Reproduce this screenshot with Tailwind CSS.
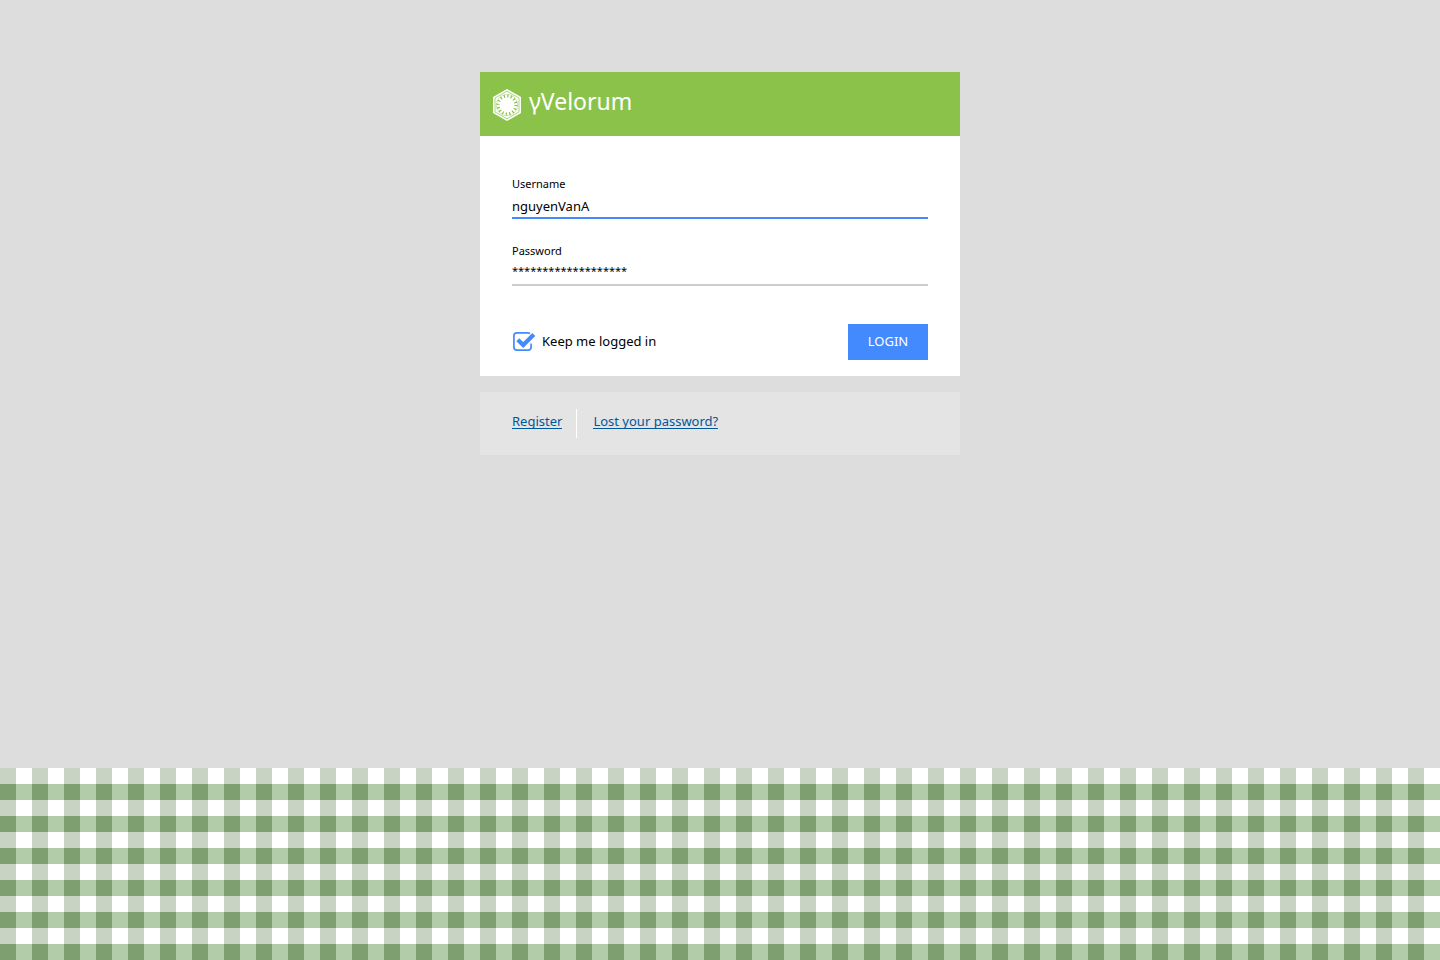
<!DOCTYPE html>
<html lang="en">
<head>
<meta charset="utf-8">
<meta name="viewport" content="width=device-width, initial-scale=1">
<title>γVelorum</title>
<script src="https://cdn.jsdelivr.net/npm/@tailwindcss/browser@4"></script>
</head>
<body class="flex min-h-screen flex-col bg-[#dddddd] font-['Segoe_UI','Noto_Sans',sans-serif] text-[13px] leading-5 text-black">
<main class="mx-auto w-full max-w-[480px] flex-1 pt-18 pb-8">
  <header class="flex h-16 items-center gap-2 bg-[#8bc34a] pl-[13px] text-white">
    <svg class="mt-0.5 h-8 w-7 shrink-0" viewBox="0 0 28 32" aria-hidden="true">
      <path d="M14 0 28 8V24L14 32 0 24V8Z" fill="#fff"/>
      <path d="M14 2.2 26 9.1V22.9L14 29.8 2 22.9V9.1Z" fill="none" stroke="#8bc34a" stroke-width=".7"/>
      <circle cx="14" cy="16" r="9" fill="none" stroke="#8bc34a" stroke-width="3.2" stroke-dasharray="1.2 2.334"/>
      <circle cx="14" cy="16" r="10.7" fill="none" stroke="#8bc34a" stroke-width=".4"/>
    </svg>
    <h1 class="pb-1.5 text-[23px] leading-8">γVelorum</h1>
  </header>
  <form class="bg-white px-8 pt-10 pb-4">
    <label for="username" class="block text-[11px] leading-4">Username</label>
    <input id="username" type="text" value="nguyenVanA" class="block h-[27px] w-full border-b-2 border-[#448aff] pt-0.5 outline-none">
    <label for="password" class="mt-6 block text-[11px] leading-4">Password</label>
    <input id="password" type="text" value="*******************" class="block h-[27px] w-full border-b-2 border-[#cccccc] pb-0.5 text-[11px] outline-none">
    <div class="mt-[38px] flex items-center justify-between">
      <label for="keep" class="flex cursor-pointer items-center gap-1.5">
        <input id="keep" type="checkbox" checked class="peer sr-only">
        <svg class="h-6 w-6 peer-checked:[&_.tick]:opacity-100" viewBox="0 0 24 24" fill="none" aria-hidden="true">
          <path d="M18 3.5Q17 2.9 16 2.9H5Q1.9 2.9 1.9 6V17Q1.9 20.1 5 20.1H16Q19.1 20.1 19.1 17V13.5" stroke="#448aff" stroke-width="1.7"/>
          <path class="tick opacity-0" d="M5.8 9.8 11.2 15 21.8 4.6" stroke="#448aff" stroke-width="4.2"/>
        </svg>
        <span class="pb-0.5">Keep me logged in</span>
      </label>
      <button type="button" class="h-9 w-20 bg-[#448aff] pb-0.5 text-white">LOGIN</button>
    </div>
  </form>
  <nav class="mt-4 flex h-[63px] items-start bg-[#e4e4e4] px-8 pt-4 text-[#01579b]">
    <a href="#" class="mt-1 h-[17px] border-b border-[#01579b] leading-[18px]">Register</a>
    <span class="mr-4 ml-3.5 mt-px h-[29px] w-px bg-white"></span>
    <a href="#" class="mt-1 h-[17px] border-b border-[#01579b] leading-[18px]">Lost your password?</a>
  </nav>
</main>
<footer class="h-48 bg-[conic-gradient(#ffffff_25%,#b2cba8_0_50%,#7ea071_0_75%,#c8d3c4_0)] bg-size-[32px_32px]"></footer>
</body>
</html>
